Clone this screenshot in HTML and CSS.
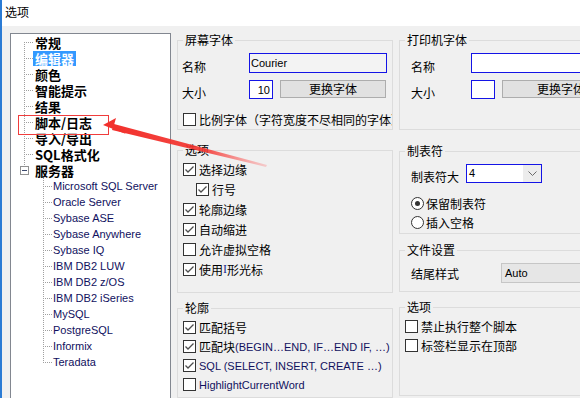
FILE: index.html
```html
<!DOCTYPE html>
<html lang="zh-CN">
<head>
    <meta charset="UTF-8">
    <title>选项</title>
    <link rel="stylesheet" href="styles.css">
</head>
<body>
<div class="window">
    <div class="titlebar">选项</div>
    <div class="main">
        <div class="tree">
            <div class="node first"><span class="branch"></span><span class="label">常规</span></div>
            <div class="node"><span class="branch"></span><span class="label selected">编辑器</span></div>
            <div class="node"><span class="branch"></span><span class="label">颜色</span></div>
            <div class="node"><span class="branch"></span><span class="label">智能提示</span></div>
            <div class="node"><span class="branch"></span><span class="label">结果</span></div>
            <div class="node"><span class="branch"></span><span class="label">脚本/日志</span></div>
            <div class="node"><span class="branch"></span><span class="label">导入/导出</span></div>
            <div class="node"><span class="branch"></span><span class="label">SQL格式化</span></div>
            <div class="node"><span class="toggle-wrap"><span class="toggle"></span></span><span class="label">服务器</span></div>
            <div class="sub">
                <div class="node"><span class="branch"></span><span class="label">Microsoft SQL Server</span></div>
                <div class="node"><span class="branch"></span><span class="label">Oracle Server</span></div>
                <div class="node"><span class="branch"></span><span class="label">Sybase ASE</span></div>
                <div class="node"><span class="branch"></span><span class="label">Sybase Anywhere</span></div>
                <div class="node"><span class="branch"></span><span class="label">Sybase IQ</span></div>
                <div class="node"><span class="branch"></span><span class="label">IBM DB2 LUW</span></div>
                <div class="node"><span class="branch"></span><span class="label">IBM DB2 z/OS</span></div>
                <div class="node"><span class="branch"></span><span class="label">IBM DB2 iSeries</span></div>
                <div class="node"><span class="branch"></span><span class="label">MySQL</span></div>
                <div class="node"><span class="branch"></span><span class="label">PostgreSQL</span></div>
                <div class="node"><span class="branch"></span><span class="label">Informix</span></div>
                <div class="node last"><span class="branch"></span><span class="label">Teradata</span></div>
            </div>
        </div>

        <div class="col col-left">
            <fieldset class="group g-font">
                <legend>屏幕字体</legend>
                <div class="body pad-left">
                    <div class="row field"><span class="lbl">名称</span><span class="input name-input readonly en">Courier</span></div>
                    <div class="row field"><span class="lbl">大小</span><span class="input size-input en">10</span><span class="btn">更换字体</span></div>
                    <div class="row check-row spaced"><span class="cb"></span>比例字体（字符宽度不尽相同的字体）</div>
                </div>
            </fieldset>
            <fieldset class="group g-opts">
                <legend>选项</legend>
                <div class="body checks20">
                    <div class="row"><span class="cb"><svg width="11" height="11" viewBox="0 0 11 11"><polyline points="1.5,5.5 4,8 9.5,2.5" /></svg></span>选择边缘</div>
                    <div class="row indent"><span class="cb"><svg width="11" height="11" viewBox="0 0 11 11"><polyline points="1.5,5.5 4,8 9.5,2.5" /></svg></span>行号</div>
                    <div class="row"><span class="cb"><svg width="11" height="11" viewBox="0 0 11 11"><polyline points="1.5,5.5 4,8 9.5,2.5" /></svg></span>轮廓边缘</div>
                    <div class="row"><span class="cb"><svg width="11" height="11" viewBox="0 0 11 11"><polyline points="1.5,5.5 4,8 9.5,2.5" /></svg></span>自动缩进</div>
                    <div class="row"><span class="cb"></span>允许虚拟空格</div>
                    <div class="row"><span class="cb"><svg width="11" height="11" viewBox="0 0 11 11"><polyline points="1.5,5.5 4,8 9.5,2.5" /></svg></span>使用<span class="ibeam">I</span>形光标</div>
                </div>
            </fieldset>
            <fieldset class="group g-outline">
                <legend>轮廓</legend>
                <div class="body checks19">
                    <div class="row"><span class="cb"><svg width="11" height="11" viewBox="0 0 11 11"><polyline points="1.5,5.5 4,8 9.5,2.5" /></svg></span>匹配括号</div>
                    <div class="row"><span class="cb"><svg width="11" height="11" viewBox="0 0 11 11"><polyline points="1.5,5.5 4,8 9.5,2.5" /></svg></span>匹配块<span class="en navy">(BEGIN…END, IF…END IF, …)</span></div>
                    <div class="row"><span class="cb"><svg width="11" height="11" viewBox="0 0 11 11"><polyline points="1.5,5.5 4,8 9.5,2.5" /></svg></span><span class="en navy">SQL (SELECT, INSERT, CREATE …)</span></div>
                    <div class="row"><span class="cb"></span><span class="en navy">HighlightCurrentWord</span></div>
                </div>
            </fieldset>
        </div>

        <div class="col col-right">
            <fieldset class="group g-font">
                <legend>打印机字体</legend>
                <div class="body pad-wide">
                    <div class="row field"><span class="lbl short">名称</span><span class="input name-input wide"></span></div>
                    <div class="row field"><span class="lbl short">大小</span><span class="input size-input"></span><span class="btn wide">更换字体</span></div>
                </div>
            </fieldset>
            <fieldset class="group g-tab">
                <legend>制表符</legend>
                <div class="body pad-wide">
                    <div class="row field tab-row"><span class="lbl tab-lbl">制表符大</span>
                        <span class="combo"><span class="combo-value en">4</span><span class="combo-arrow"><svg width="9" height="6" viewBox="0 0 9 6"><polyline points="0.5,0.5 4.5,4.5 8.5,0.5" /></svg></span></span>
                    </div>
                    <div class="row radio-row first-radio"><span class="radio checked"></span>保留制表符</div>
                    <div class="row radio-row"><span class="radio"></span>插入空格</div>
                </div>
            </fieldset>
            <fieldset class="group g-file">
                <legend>文件设置</legend>
                <div class="body pad-wide">
                    <div class="row field"><span class="lbl end-lbl">结尾样式</span><span class="dropdown en">Auto</span></div>
                </div>
            </fieldset>
            <fieldset class="group g-misc">
                <legend>选项</legend>
                <div class="body checks19">
                    <div class="row"><span class="cb"></span>禁止执行整个脚本</div>
                    <div class="row"><span class="cb"></span>标签栏显示在顶部</div>
                </div>
            </fieldset>
        </div>
    </div>

    <svg class="arrow" width="580" height="398" viewBox="0 0 580 398">
        <defs>
            <linearGradient id="fade" x1="110" y1="0" x2="268" y2="0" gradientUnits="userSpaceOnUse">
                <stop offset="0" stop-color="#f2302c"/>
                <stop offset="0.6" stop-color="#f3342f" stop-opacity="0.9"/>
                <stop offset="1" stop-color="#f66" stop-opacity="0.25"/>
            </linearGradient>
        </defs>
        <rect x="18.5" y="115.5" width="90" height="19" fill="none" stroke="#f03c3c" stroke-width="1"/>
        <polygon points="114,124 267,165 266,167 112,130" fill="url(#fade)"/>
        <polygon points="103,125 116,118 114,125 126,134" fill="#f2302c"/>
    </svg>
</div>
</body>
</html>
```

FILE: styles.css
```css
body { margin: 0; overflow: hidden; background: #f0f0f0; font-family: "Noto Sans CJK SC", "Liberation Sans", sans-serif; font-size: 12px; color: #000; }
.window { position: relative; width: 660px; height: 398px; border-left: 2px solid #2b7bd4; background: #f0f0f0; }
.titlebar { height: 26px; background: #fff; padding-left: 3px; line-height: 24px; }
.main { display: flex; gap: 6px; padding: 7px 0 0 8px; }

/* tree */
.tree { flex: none; width: 161px; height: 380px; box-sizing: border-box; border: 1px solid #828790; background: #fff; }
.node { display: flex; align-items: center; height: 16px; padding-left: 13px; }
.branch { flex: none; width: 9px; align-self: stretch;
    background:
        repeating-linear-gradient(to bottom, #a0a0a0 0 1px, transparent 1px 2px) 0 0 / 1px 100% no-repeat,
        repeating-linear-gradient(to right, #a0a0a0 0 1px, transparent 1px 2px) 0 8px / 100% 1px no-repeat; }
.first .branch {
    background:
        repeating-linear-gradient(to bottom, #a0a0a0 0 1px, transparent 1px 2px) 0 8px / 1px 8px no-repeat,
        repeating-linear-gradient(to right, #a0a0a0 0 1px, transparent 1px 2px) 0 8px / 100% 1px no-repeat; }
.last .branch {
    background:
        repeating-linear-gradient(to bottom, #a0a0a0 0 1px, transparent 1px 2px) 0 0 / 1px 9px no-repeat,
        repeating-linear-gradient(to right, #a0a0a0 0 1px, transparent 1px 2px) 0 8px / 100% 1px no-repeat; }
.toggle-wrap { flex: none; width: 9px; align-self: stretch; display: flex; align-items: center;
    background: repeating-linear-gradient(to bottom, #a0a0a0 0 1px, transparent 1px 2px) 0 0 / 1px 4px no-repeat; }
.toggle { width: 9px; height: 9px; margin-left: -4px; box-sizing: border-box; border: 1px solid #919191; background: #fff; display: flex; align-items: center; justify-content: center; }
.toggle::after { content: ""; width: 5px; height: 1px; background: #3c4a6e; }
.label { padding: 0 2px; line-height: 15px; font-size: 13px; font-weight: bold; white-space: nowrap; }
.label.selected { background: #3399ff; color: #fff; }
.sub .node { padding-left: 32px; }
.sub .label { padding-left: 1px; font-family: "Liberation Sans", sans-serif; font-size: 11px; font-weight: normal; color: #10105e; }

/* group boxes */
.col { flex: none; display: flex; flex-direction: column; }
.col-left { width: 216px; }
.col-right { width: 230px; }
.group { margin: 0; padding: 0; min-width: 0; box-sizing: border-box; border: 1px solid #dcdcdc; }
.group legend { margin-left: 5px; padding: 0 2px; line-height: 14px; }
.g-font { height: 97px; }
.g-opts { height: 150px; margin-top: 13px; }
.g-outline { height: 97px; margin-top: 8px; }
.g-tab { height: 90px; margin-top: 14px; }
.g-file { height: 49px; margin-top: 9px; }
.g-misc { height: 96px; margin-top: 8px; }

.body { overflow: hidden; padding-right: 3px; }
.pad-left { padding-left: 4px; }
.pad-wide { padding-left: 11px; }
.row { display: flex; align-items: center; white-space: nowrap; }
.field { height: 20px; margin-top: 6px; }
.lbl { flex: none; width: 67px; padding-top: 6px; }
.lbl.short { width: 60px; }
.en { font-family: "Liberation Sans", sans-serif; font-size: 11px; }
.navy { color: #10105e; }

.input { flex: none; box-sizing: border-box; height: 20px; border: 1px solid #1414e6; background: #fff; line-height: 18px; padding: 0 1px; }
.name-input { width: 138px; }
.name-input.wide { width: 170px; }
.readonly { background: #f3f3f3; }
.size-input { width: 24px; height: 19px; text-align: right; padding-right: 2px; }
.btn { flex: none; width: 106px; height: 18px; margin-left: 7px; box-sizing: border-box; border: 1px solid #adadad; background: #e1e1e1; text-align: center; line-height: 16px; }
.btn.wide { width: 118px; }

.check-row.spaced { height: 14px; margin-top: 13px; padding-left: 1px; }
.checks20 { padding-left: 5px; padding-top: 2px; }
.checks20 .row { height: 20px; }
.checks19 { padding-left: 5px; padding-top: 3px; }
.checks19 .row { height: 19px; }
.indent { padding-left: 13px; }
.cb { flex: none; width: 13px; height: 13px; box-sizing: border-box; border: 1px solid #333; background: #fff; margin-right: 3px; display: flex; align-items: center; justify-content: center; }
.cb svg { fill: none; stroke: #4d4d4d; stroke-width: 1.3; }
.ibeam { font-family: "Liberation Serif", serif; color: #1a2a8a; }

.tab-row { height: 19px; }
.tab-lbl { width: 55px; padding-top: 6px; }
.combo { flex: none; display: flex; width: 76px; height: 19px; box-sizing: border-box; border: 1px solid #1414e6; background: #fff; }
.combo-value { flex: 1; padding-left: 2px; line-height: 17px; }
.combo-arrow { width: 18px; background: #ececec; display: flex; align-items: center; justify-content: center; }
.combo-arrow svg { fill: none; stroke: #6a6a6a; stroke-width: 1; }
.radio-row { height: 19px; }
.first-radio { margin-top: 11px; }
.radio { flex: none; width: 13px; height: 13px; box-sizing: border-box; border: 1px solid #333; border-radius: 50%; background: #fff; margin-right: 2px; display: flex; align-items: center; justify-content: center; }
.radio.checked::after { content: ""; width: 5px; height: 5px; border-radius: 50%; background: #333; }
.end-lbl { width: 90px; padding-top: 0; }
.dropdown { flex: none; width: 140px; height: 20px; box-sizing: border-box; border: 1px solid #c6c6c6; background: #e6e6e6; line-height: 18px; padding-left: 3px; }

.arrow { position: absolute; left: -2px; top: 0; pointer-events: none; }
```
